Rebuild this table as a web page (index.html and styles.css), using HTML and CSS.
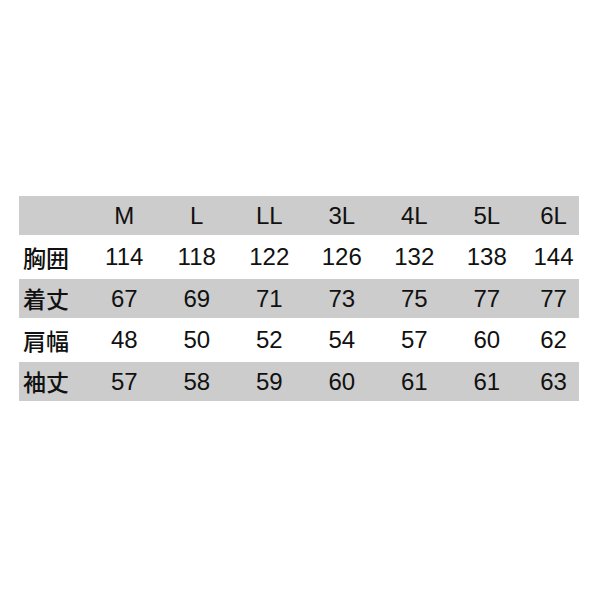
FILE: index.html
```html
<!DOCTYPE html>
<html lang="ja">
<head>
<meta charset="utf-8">
<link rel="stylesheet" href="styles.css">
</head>
<body>
<div class="sheet">
  <div class="size-table">
    <div class="row gray head">
      <div class="cell label"></div>
      <div class="cell">M</div><div class="cell">L</div><div class="cell">LL</div><div class="cell">3L</div><div class="cell">4L</div><div class="cell">5L</div><div class="cell last">6L</div>
    </div>
    <div class="row white">
      <div class="cell label">胸囲</div>
      <div class="cell">114</div><div class="cell">118</div><div class="cell">122</div><div class="cell">126</div><div class="cell">132</div><div class="cell">138</div><div class="cell last">144</div>
    </div>
    <div class="row gray">
      <div class="cell label">着丈</div>
      <div class="cell">67</div><div class="cell">69</div><div class="cell">71</div><div class="cell">73</div><div class="cell">75</div><div class="cell">77</div><div class="cell last">77</div>
    </div>
    <div class="row white">
      <div class="cell label">肩幅</div>
      <div class="cell">48</div><div class="cell">50</div><div class="cell">52</div><div class="cell">54</div><div class="cell">57</div><div class="cell">60</div><div class="cell last">62</div>
    </div>
    <div class="row gray">
      <div class="cell label">袖丈</div>
      <div class="cell">57</div><div class="cell">58</div><div class="cell">59</div><div class="cell">60</div><div class="cell">61</div><div class="cell">61</div><div class="cell last">63</div>
    </div>
  </div>
</div>
</body>
</html>
```
FILE: styles.css
```css
html, body {
  margin: 0;
  padding: 0;
  background: #ffffff;
}
.sheet {
  width: 600px;
  height: 600px;
  padding-top: 196px;
  padding-left: 19px;
  box-sizing: border-box;
}
.size-table {
  width: 560px;
  font-family: "Liberation Sans", "Noto Sans CJK JP", sans-serif;
  font-size: 24px;
  color: #111111;
}
.row {
  display: grid;
  grid-template-columns: 69px repeat(6, 72.5px) 56px;
  align-items: center;
}
.row.gray {
  background: #cccccc;
  height: 39px;
}
.row.white {
  background: #ffffff;
  height: 44px;
}
.cell {
  text-align: center;
  line-height: 1;
}
.cell.last {
  padding-left: 5px;
}
.cell.label {
  text-align: left;
  padding-left: 4px;
  font-family: "Noto Sans CJK JP", sans-serif;
  font-size: 23px;
  font-weight: 500;
}
```
